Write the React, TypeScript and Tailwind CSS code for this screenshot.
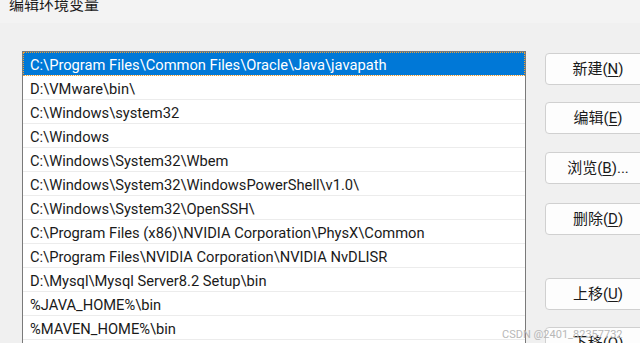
const paths = [
  'C:\\Program Files\\Common Files\\Oracle\\Java\\javapath',
  'D:\\VMware\\bin\\',
  'C:\\Windows\\system32',
  'C:\\Windows',
  'C:\\Windows\\System32\\Wbem',
  'C:\\Windows\\System32\\WindowsPowerShell\\v1.0\\',
  'C:\\Windows\\System32\\OpenSSH\\',
  'C:\\Program Files (x86)\\NVIDIA Corporation\\PhysX\\Common',
  'C:\\Program Files\\NVIDIA Corporation\\NVIDIA NvDLISR',
  'D:\\Mysql\\Mysql Server8.2 Setup\\bin',
  '%JAVA_HOME%\\bin',
  '%MAVEN_HOME%\\bin',
];

function Btn({ label, k, rest, className }: { label: string; k: string; rest?: string; className?: string }) {
  return (
    <div
      className={`h-[32px] w-[110px] rounded-[4px] border border-[#d0d0d0] bg-[#fdfdfd] flex items-center justify-center text-[15px] text-[#1a1a1a] ${className ?? ''}`}
    >
      <span className="pr-[4px] pt-[1px]">
        {label}(<span className="underline underline-offset-2">{k}</span>){rest}
      </span>
    </div>
  );
}

export default function App() {
  return (
    <div
      className="w-[640px] h-[343px] overflow-hidden bg-[#f0f0f0] relative"
      style={{ fontFamily: 'Roboto, "Noto Sans CJK SC", sans-serif' }}
    >
      {/* title */}
      <div className="h-[23px] bg-[#f3f3f3] relative overflow-hidden">
        <div className="absolute left-[9px] top-[-6px] text-[15px] text-[#1a1a1a]">编辑环境变量</div>
      </div>

      <div className="flex pt-[28px]">
        {/* list */}
        <div className="ml-[22px] w-[504px] shrink-0 h-[320px] border border-[#7a7a7a] border-b-0 bg-white">
          {paths.map((p, i) => (
            <div
              key={p}
              className={`h-[24px] border-b border-[#ececec] flex items-center pl-[7px] pt-[4px] text-[14.7px] leading-none whitespace-nowrap ${
                i === 0 ? 'bg-[#0078d7] text-white outline-1 outline-dotted outline-[#f0a030] -outline-offset-1' : 'text-[#1a1a1a]'
              }`}
            >
              {p}
            </div>
          ))}
        </div>

        {/* buttons */}
        <div className="ml-[19px] pt-[2px] flex flex-col shrink-0">
          <Btn label="新建" k="N" />
          <Btn label="编辑" k="E" className="mt-[17px]" />
          <Btn label="浏览" k="B" rest="..." className="mt-[18px]" />
          <Btn label="删除" k="D" className="mt-[19px]" />
          <Btn label="上移" k="U" className="mt-[43px]" />
          <Btn label="下移" k="O" className="mt-[17px]" />
        </div>
      </div>

      <div className="absolute left-[502px] top-[329px] text-[11px] text-[#b8b8b8] leading-none">
        CSDN @2401_82357732
      </div>
    </div>
  );
}
